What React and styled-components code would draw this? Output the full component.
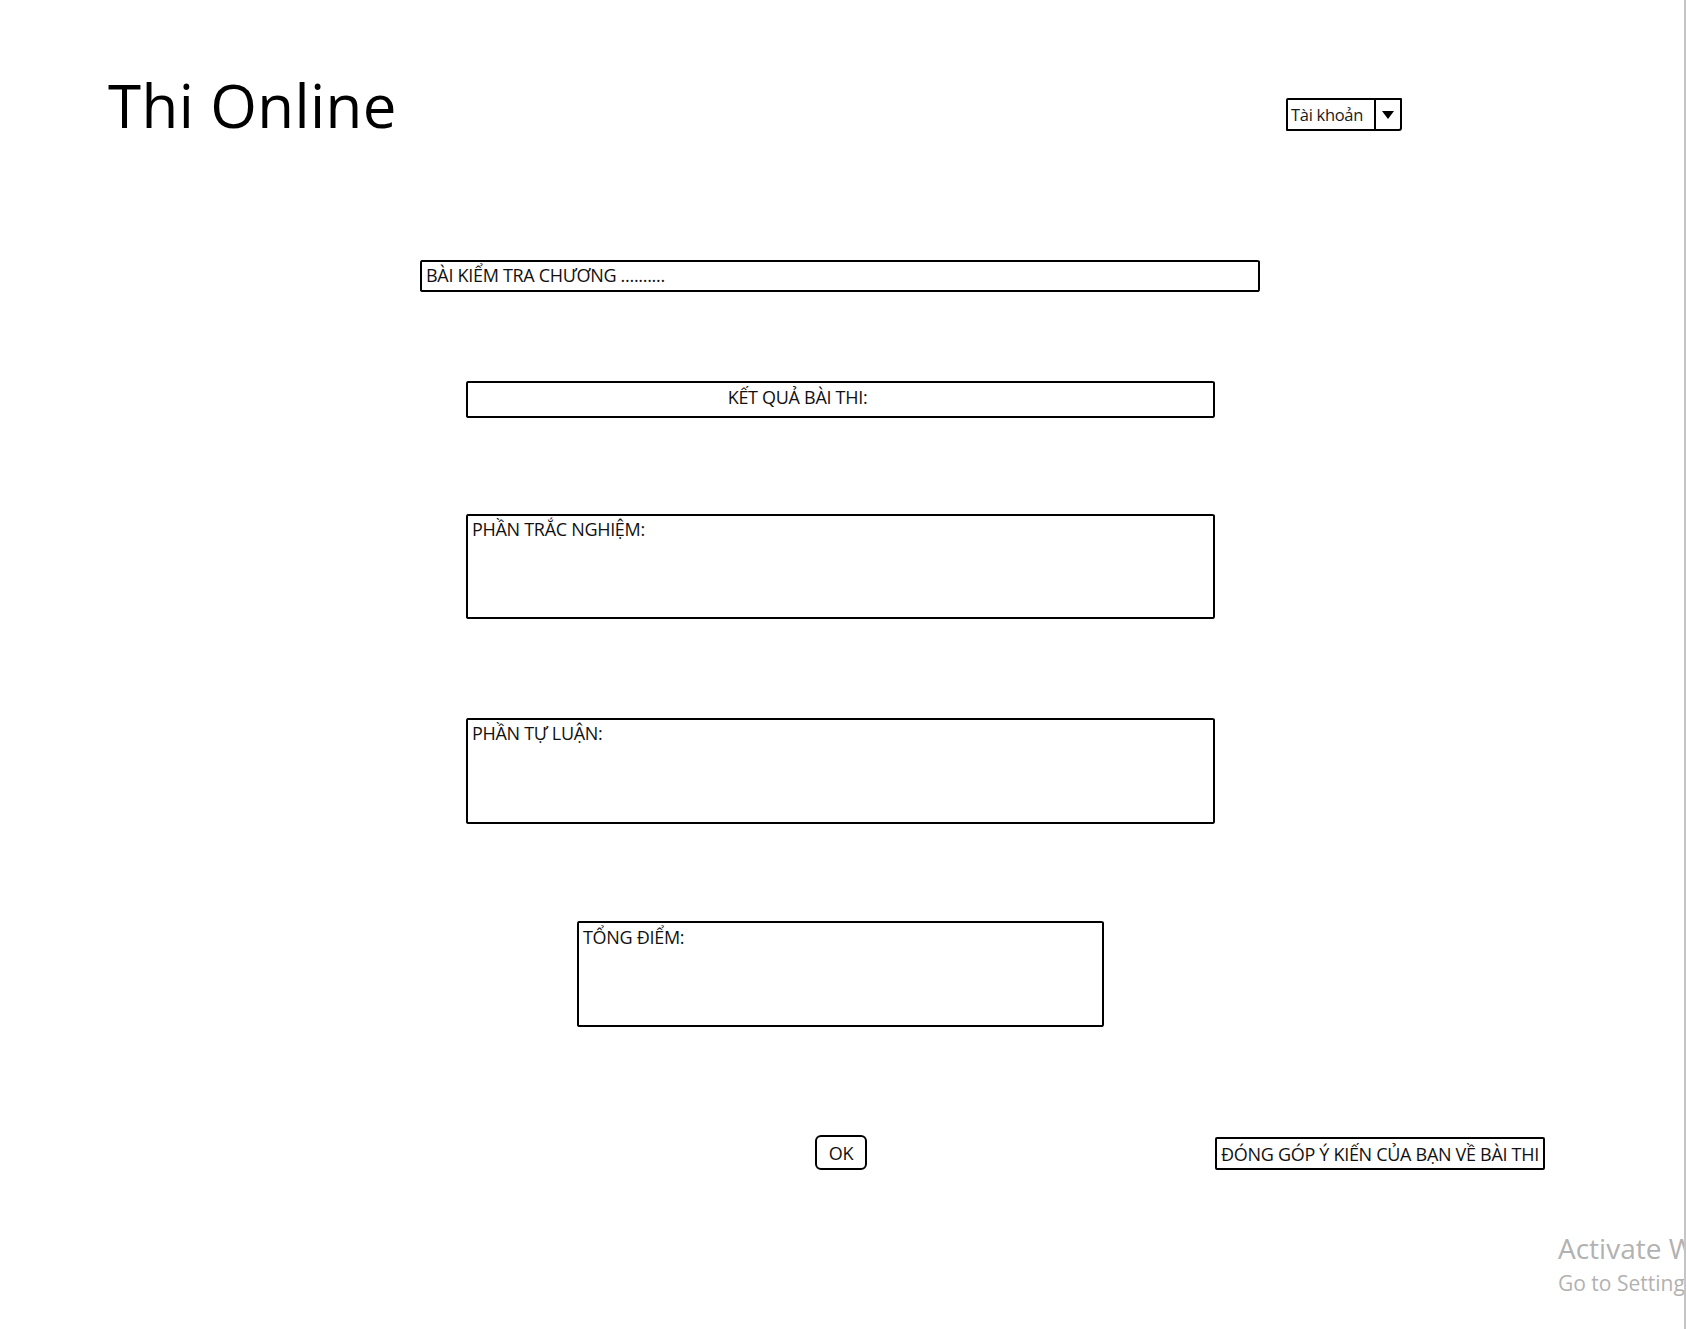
import React from "react";
import styled, { createGlobalStyle } from "styled-components";

const GlobalStyle = createGlobalStyle`
  html, body {
    margin: 0;
    padding: 0;
    background: #ffffff;
  }
  body {
    font-family: "Open Sans", "Noto Sans", sans-serif;
    color: #111;
  }
`;

const Page = styled.div`
  position: relative;
  width: 1686px;
  height: 1329px;
  box-sizing: border-box;
  border-right: 2px solid #c4c4c4;
  overflow: hidden;

  &::after {
    content: "";
    position: absolute;
    top: 0;
    right: -2px;
    width: 2px;
    height: 34px;
    background: #8f8f8f;
  }
`;

const Header = styled.header`
  display: flex;
  align-items: flex-start;
  justify-content: space-between;
  padding: 64px 0 0 108px;
  width: 1402px;
  box-sizing: border-box;
`;

const Title = styled.h1`
  margin: 0;
  font-family: "Open Sans", "Noto Sans", sans-serif;
  font-weight: 400;
  font-size: 60px;
  line-height: 82px;
  letter-spacing: 0.4px;
  color: #000;
`;

const Account = styled.div`
  display: flex;
  align-items: stretch;
  margin-top: 34px;
  width: 116px;
  height: 33px;
  border: 2px solid #000;
  border-radius: 2px 1px 3px 1px;
  box-sizing: border-box;
`;

const AccountLabel = styled.span`
  flex: 1;
  display: flex;
  align-items: center;
  padding: 0 0 0 3px;
  font-size: 16.5px;
  color: #1a1a1a;
  letter-spacing: -0.3px;
`;

const AccountArrow = styled.span`
  display: flex;
  align-items: center;
  justify-content: center;
  width: 24px;
  border-left: 2px solid #000;
`;

const Content = styled.main`
  display: flex;
  flex-direction: column;
`;

const Box = styled.div`
  box-sizing: border-box;
  margin-top: ${(p) => p.top}px;
  margin-left: ${(p) => p.left}px;
  width: ${(p) => p.width}px;
  height: ${(p) => p.height}px;
  border: 2px solid #000;
  border-radius: 2px 3px 2px 3px / 3px 2px 3px 2px;
  display: flex;
  align-items: ${(p) => (p.center ? "center" : "flex-start")};
  justify-content: ${(p) => (p.center ? "center" : "flex-start")};
  padding: ${(p) => p.pad || "0"};
`;

const Label = styled.span`
  font-size: 18px;
  line-height: 24px;
  letter-spacing: -0.3px;
  color: #111;
  white-space: nowrap;
`;

const Actions = styled.div`
  display: flex;
  align-items: flex-start;
  margin-top: 108px;
  margin-left: 815px;
`;

const Button = styled.button`
  box-sizing: border-box;
  width: ${(p) => p.width}px;
  height: ${(p) => p.height}px;
  margin-left: ${(p) => p.offset || 0}px;
  margin-top: ${(p) => p.dy || 0}px;
  padding: 0;
  background: #fff;
  border: 2px solid #000;
  border-radius: ${(p) => (p.round ? "6px" : "2px")};
  font-family: "Open Sans", "Noto Sans", sans-serif;
  font-size: 18px;
  letter-spacing: -0.3px;
  color: #111;
  white-space: nowrap;
  cursor: pointer;
`;

const Watermark = styled.div`
  position: absolute;
  left: 1558px;
  top: 1228px;
  white-space: nowrap;
  color: #b2b2b2;
  font-family: "Open Sans", "Noto Sans", sans-serif;
  pointer-events: none;
`;

const WatermarkTitle = styled.div`
  font-size: 28px;
  line-height: 40px;
`;

const WatermarkSub = styled.div`
  font-size: 21px;
  line-height: 30px;
`;

export default function App() {
  return (
    <>
      <GlobalStyle />
      <Page>
        <Header>
          <Title>Thi Online</Title>
          <Account>
            <AccountLabel>Tài khoản</AccountLabel>
            <AccountArrow>
              <svg width="14" height="10" viewBox="0 0 14 10">
                <path d="M1 1 L13 1 L7 9 Z" fill="#000" />
              </svg>
            </AccountArrow>
          </Account>
        </Header>

        <Content>
          <Box top={114} left={420} width={840} height={32} pad="1px 4px">
            <Label>BÀI KIỂM TRA CHƯƠNG ..........</Label>
          </Box>
          <Box top={89} left={466} width={749} height={37} center pad="0 86px 5px 0">
            <Label>KẾT QUẢ BÀI THI:</Label>
          </Box>
          <Box top={96} left={466} width={749} height={105} pad="1px 4px">
            <Label>PHẦN TRẮC NGHIỆM:</Label>
          </Box>
          <Box top={99} left={466} width={749} height={106} pad="1px 4px">
            <Label>PHẦN TỰ LUẬN:</Label>
          </Box>
          <Box top={97} left={577} width={527} height={106} pad="2px 4px">
            <Label>TỔNG ĐIỂM:</Label>
          </Box>

          <Actions>
            <Button width={52} height={35} round>
              OK
            </Button>
            <Button width={330} height={33} offset={348} dy={2}>
              ĐÓNG GÓP Ý KIẾN CỦA BẠN VỀ BÀI THI
            </Button>
          </Actions>
        </Content>

        <Watermark>
          <WatermarkTitle>Activate Windows</WatermarkTitle>
          <WatermarkSub>Go to Settings to activate Windows.</WatermarkSub>
        </Watermark>
      </Page>
    </>
  );
}
